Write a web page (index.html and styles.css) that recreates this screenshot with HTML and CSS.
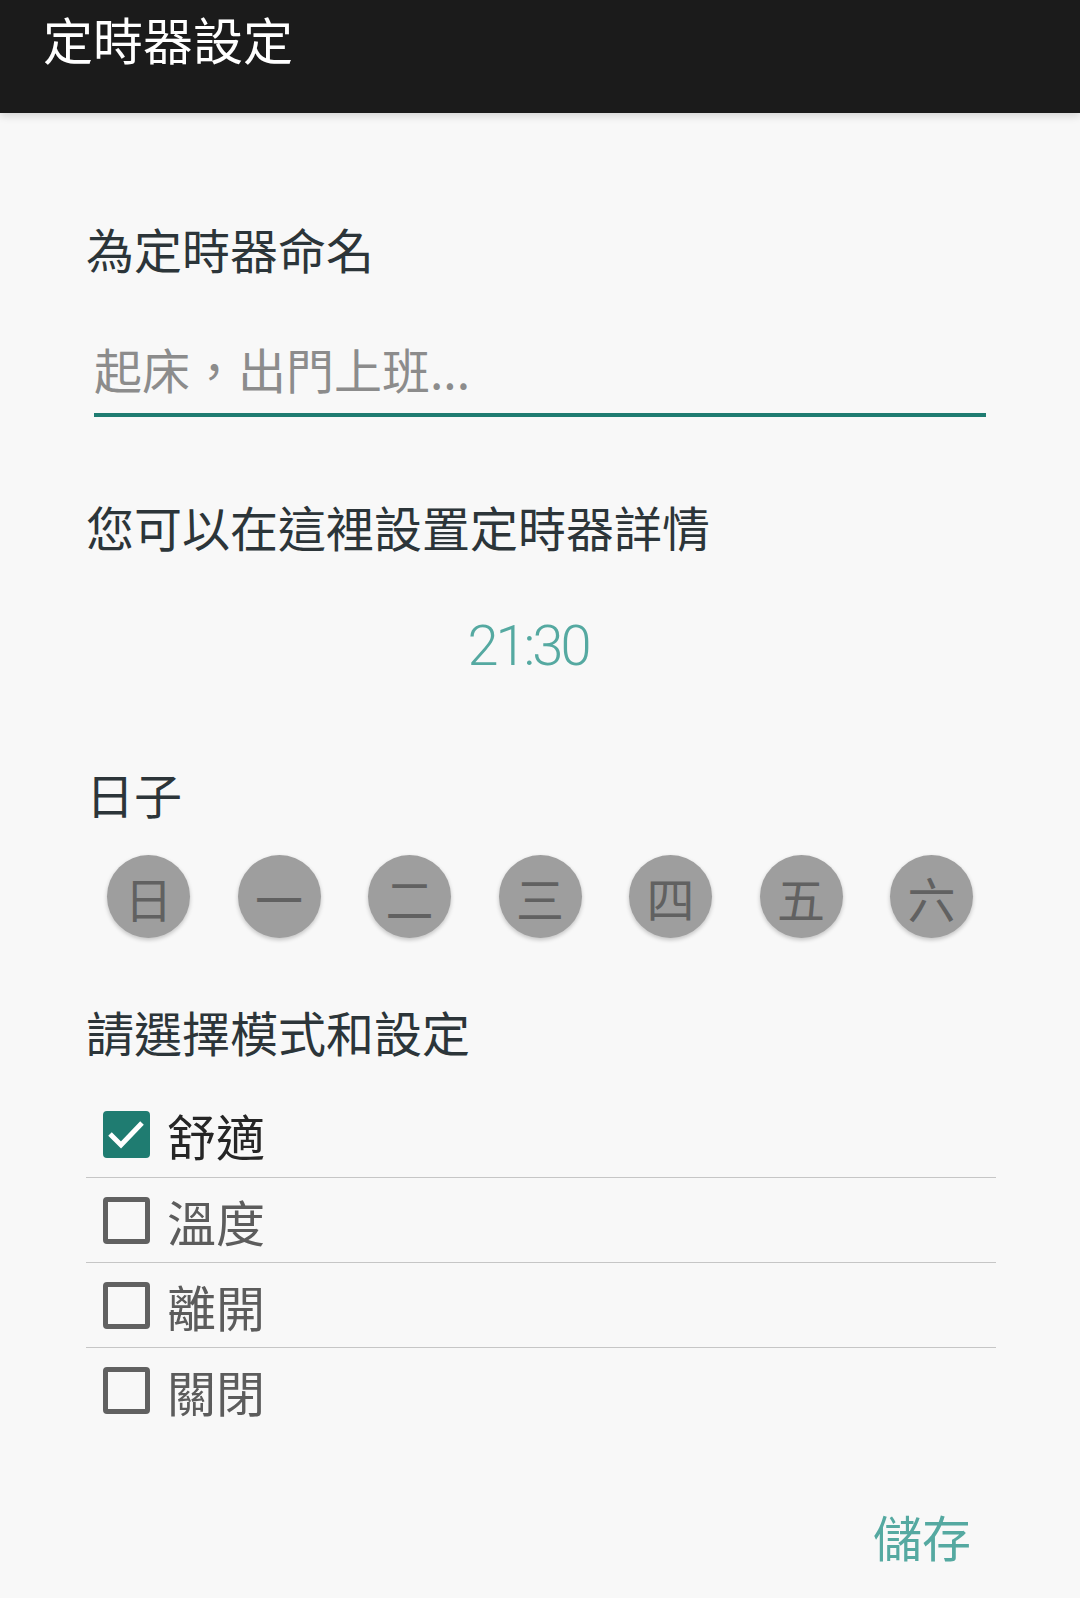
FILE: index.html
```html
<!DOCTYPE html>
<html lang="zh-Hant">
  <head>
    <meta charset="UTF-8" />
    <meta name="viewport" content="width=device-width, initial-scale=1.0" />
    <title>定時器設定</title>
    <link rel="stylesheet" href="styles.css">
  </head>
  <body>
    <!-- Верхняя панель -->
    <header class="toolbar">
      <h1 class="toolbar-title">定時器設定</h1>
    </header>

    <main class="content">
      <h2 class="section-title name-title">為定時器命名</h2>
      <input class="name-input" type="text" placeholder="起床，出門上班..." />

      <h2 class="section-title details-title">您可以在這裡設置定時器詳情</h2>
      <div class="time">21:30</div>

      <h2 class="section-title days-title">日子</h2>
      <div class="days">
        <button class="day">日</button>
        <button class="day">一</button>
        <button class="day">二</button>
        <button class="day">三</button>
        <button class="day">四</button>
        <button class="day">五</button>
        <button class="day">六</button>
      </div>

      <h2 class="section-title mode-title">請選擇模式和設定</h2>
      <ul class="modes">
        <li class="mode checked">
          <span class="box">
            <svg viewBox="0 0 47 47" width="47" height="47">
              <polyline points="7,23 18,34 39,12" fill="none" stroke="#fff" stroke-width="5" />
            </svg>
          </span>
          <span class="mode-label">舒適</span>
        </li>
        <li class="mode">
          <span class="box"></span>
          <span class="mode-label">溫度</span>
        </li>
        <li class="mode">
          <span class="box"></span>
          <span class="mode-label">離開</span>
        </li>
        <li class="mode">
          <span class="box"></span>
          <span class="mode-label">關閉</span>
        </li>
      </ul>

      <div class="actions">
        <a href="#" class="save">儲存</a>
      </div>
    </main>
  </body>
</html>
```

FILE: styles.css
```css
/* ======= Переменные ======= */
:root {
  --font-family: "Noto Sans CJK TC", "Noto Sans", sans-serif;
  --color-background: #f8f8f8;
  --color-bar: #1b1b1b;
  --color-title: #2c3539;
  --color-teal: #1f7c71;
  --color-teal-light: #55a9a1;
  --color-gray: #9e9e9e;
  --color-gray-dark: #616161;
  --color-divider: #c6c6c6;
}

* {
  box-sizing: border-box;
  margin: 0;
  padding: 0;
}

body {
  font-family: var(--font-family);
  background-color: var(--color-background);
  min-height: 1598px;
}

/* ======= Панель ======= */
.toolbar {
  height: 113px;
  padding: 13px 0 0 43px;
  background-color: var(--color-bar);
  box-shadow: 0 3px 8px rgba(0, 0, 0, 0.14);
}

.toolbar-title {
  font-size: 50px;
  font-weight: normal;
  line-height: 1;
  color: #fff;
}

/* ======= Содержимое ======= */
.content {
  padding: 0 84px 0 86px;
}

.section-title {
  font-size: 48px;
  font-weight: normal;
  line-height: 1;
  color: var(--color-title);
}

.name-title {
  margin-top: 111px;
}

.name-input {
  display: block;
  width: calc(100% - 18px);
  height: 80px;
  margin: 65px 10px 0 8px;
  padding: 7px 0 21px;
  font-family: var(--font-family);
  font-size: 48px;
  color: #333;
  background: transparent;
  border: none;
  border-bottom: 4px solid var(--color-teal);
  outline: none;
}

.name-input::placeholder {
  color: #8c8c8c;
}

.details-title {
  margin-top: 85px;
}

.time {
  margin-top: 68px;
  padding-right: 26px;
  font-family: Roboto, sans-serif;
  font-weight: 300;
  font-size: 56px;
  line-height: 1;
  letter-spacing: -3px;
  text-align: center;
  color: var(--color-teal-light);
}

.days-title {
  margin-top: 95px;
}

/* ======= Дни недели ======= */
.days {
  display: flex;
  justify-content: space-between;
  margin-top: 38px;
  padding: 0 23px 0 21px;
}

.day {
  width: 83px;
  height: 83px;
  border: none;
  border-radius: 50%;
  display: flex;
  align-items: center;
  justify-content: center;
  font-family: var(--font-family);
  font-size: 48px;
  line-height: 1;
  color: var(--color-gray-dark);
  background-color: var(--color-gray);
  box-shadow: 0 2px 4px rgba(0, 0, 0, 0.22);
}

.mode-title {
  margin-top: 69px;
}

/* ======= Режимы ======= */
.modes {
  list-style: none;
  margin-top: 37px;
}

.mode {
  display: flex;
  align-items: center;
  gap: 17px;
  height: 85px;
  padding-left: 17px;
  border-bottom: 1px solid var(--color-divider);
}

.mode:first-child {
  height: 86px;
}

.mode:last-child {
  height: 84px;
  border-bottom: none;
}

.box {
  width: 47px;
  height: 47px;
  border: 5px solid var(--color-gray-dark);
  border-radius: 4px;
  flex-shrink: 0;
}

.box svg {
  display: block;
  margin: -5px;
}

.mode.checked .box {
  border-color: var(--color-teal);
  background-color: var(--color-teal);
}

.mode-label {
  font-size: 49px;
  line-height: 1;
  color: #5c5c5c;
}

.mode.checked .mode-label {
  color: #262626;
}

/* ======= Кнопка ======= */
.actions {
  display: flex;
  justify-content: flex-end;
  margin-top: 79px;
  padding-right: 25px;
}

.save {
  font-size: 49px;
  line-height: 1;
  color: var(--color-teal-light);
  text-decoration: none;
}
```
